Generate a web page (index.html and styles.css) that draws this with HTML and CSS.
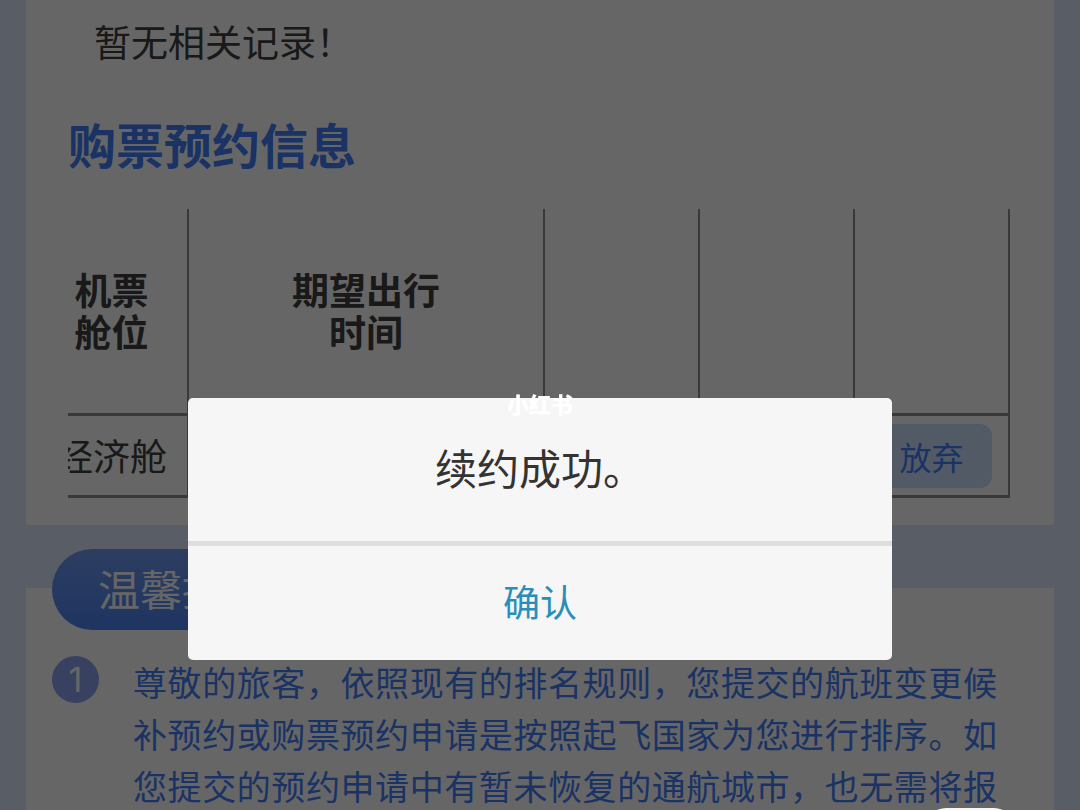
FILE: index.html
```html
<!DOCTYPE html>
<html lang="zh-CN">
<head>
  <meta charset="UTF-8" />
  <meta name="viewport" content="width=device-width, initial-scale=1.0"/>
  <title>购票预约信息</title>
  <link rel="stylesheet" href="styles.css">
</head>
<body>

  <main class="page">
    <section class="card booking">
      <p class="empty">暂无相关记录！</p>
      <h2>购票预约信息</h2>

      <div class="table-wrap">
        <table>
          <colgroup>
            <col class="col-cabin">
            <col class="col-time">
            <col class="col-info">
            <col class="col-info">
            <col>
          </colgroup>
          <thead>
            <tr>
              <th>机票<br>舱位</th>
              <th>期望出行<br>时间</th>
              <th></th>
              <th></th>
              <th></th>
            </tr>
          </thead>
          <tbody>
            <tr>
              <td>经济舱</td>
              <td></td>
              <td></td>
              <td></td>
              <td><button type="button" class="drop-btn">放弃</button></td>
            </tr>
          </tbody>
        </table>
      </div>
    </section>

    <section class="card tips">
      <h3 class="tips-title">温馨提示</h3>
      <div class="tip">
        <span class="tip-num">1</span>
        <p>尊敬的旅客，依照现有的排名规则，您提交的航班变更候补预约或购票预约申请是按照起飞国家为您进行排序。如您提交的预约申请中有暂未恢复的通航城市，也无需将报</p>
      </div>
    </section>
  </main>

  <!-- Modal -->
  <div class="modal">
    <div class="modal-content" role="dialog" aria-modal="true" aria-labelledby="modalText">
      <span class="watermark">小红书</span>
      <p id="modalText">续约成功。</p>
      <button type="button" class="confirm-btn">确认</button>
    </div>
    <div class="float-tab"></div>
  </div>

</body>
</html>
```

FILE: styles.css
```css
* {
  box-sizing: border-box;
}

body {
  margin: 0;
  height: 100vh;
  overflow: hidden;
  background: #dce9ff;
  color: #404040;
  font-family: "Noto Sans CJK SC", sans-serif;
  font-size: 37px;
}

h2, h3, p {
  margin: 0;
}

button {
  border: none;
  font-family: inherit;
  cursor: pointer;
}

.page {
  display: flex;
  flex-direction: column;
  gap: 63px;
  height: 100vh;
  padding: 0 26px;
  overflow: hidden;
}

.card {
  flex: none;
  background: white;
}

.booking {
  padding: 14px 44px 27px 42px;
}

.empty {
  padding-left: 26px;
  line-height: 54px;
}

h2 {
  margin: 39px 0 30px;
  color: #4380fa;
  font-size: 48px;
  font-weight: 700;
  line-height: 72px;
}

/* the table is scrolled sideways a little */
.table-wrap {
  overflow: hidden;
}

table {
  width: calc(100% + 32px);
  margin-left: -32px;
  table-layout: fixed;
  border-collapse: collapse;
}

.col-cabin {
  width: 152px;
}

.col-time {
  width: 356px;
}

.col-info {
  width: 155px;
}

th, td {
  padding: 0;
  border-right: 2px solid #909090;
  border-bottom: 3px solid #909090;
  text-align: center;
}

th {
  height: 205px;
  padding-bottom: 2px;
  font-weight: 700;
  line-height: 42px;
}

td {
  height: 82px;
}

.drop-btn {
  display: block;
  width: 120px;
  height: 64px;
  margin: 2px auto 0;
  padding: 0;
  border-radius: 12px;
  background: #cde0ff;
  color: #4380fa;
  font-size: 32px;
}

.tips {
  padding: 0 57px 40px 26px;
}

.tips-title {
  width: 260px;
  height: 81px;
  margin-top: -39px;
  padding-left: 46px;
  border-radius: 41px;
  background: linear-gradient(#709af0, #4c84f4);
  color: white;
  font-size: 42px;
  font-weight: 400;
  line-height: 78px;
}

.tip {
  display: flex;
  gap: 34px;
  margin-top: 26px;
}

.tip-num {
  flex: none;
  width: 47px;
  height: 47px;
  border-radius: 50%;
  background: #8ca4ee;
  color: white;
  font-family: Inter, sans-serif;
  font-size: 34px;
  line-height: 47px;
  text-align: center;
}

.tip p {
  flex: 1;
  color: #4380fa;
  font-size: 34px;
  line-height: 52px;
  text-align: justify;
  text-align-last: justify;
}

/* Modal */
.modal {
  position: fixed;
  top: 0;
  left: 0;
  width: 100%;
  height: 100%;
  padding-top: 398px;
  background: rgba(0,0,0,0.6);
  display: flex;
  justify-content: center;
  align-items: flex-start;
  overflow: hidden;
}

.modal-content {
  position: relative;
  width: 704px;
  max-width: 90%;
  border-radius: 5px;
  background: #f6f6f6;
  text-align: center;
}

.modal-content p {
  padding-bottom: 5px;
  color: #333;
  font-size: 42px;
  line-height: 138px;
  border-bottom: 5px solid #dedede;
}

.confirm-btn {
  display: block;
  width: 100%;
  height: 114px;
  padding: 0 0 4px;
  background: none;
  color: #2a8fb8;
  font-size: 37px;
}

.watermark {
  position: absolute;
  top: -10px;
  left: 0;
  width: 100%;
  color: white;
  font-size: 22px;
  font-weight: 900;
  line-height: 30px;
}

.float-tab {
  position: absolute;
  right: 66px;
  bottom: -38px;
  width: 88px;
  height: 40px;
  border-radius: 20px;
  background: #f6f6f6;
}
```
